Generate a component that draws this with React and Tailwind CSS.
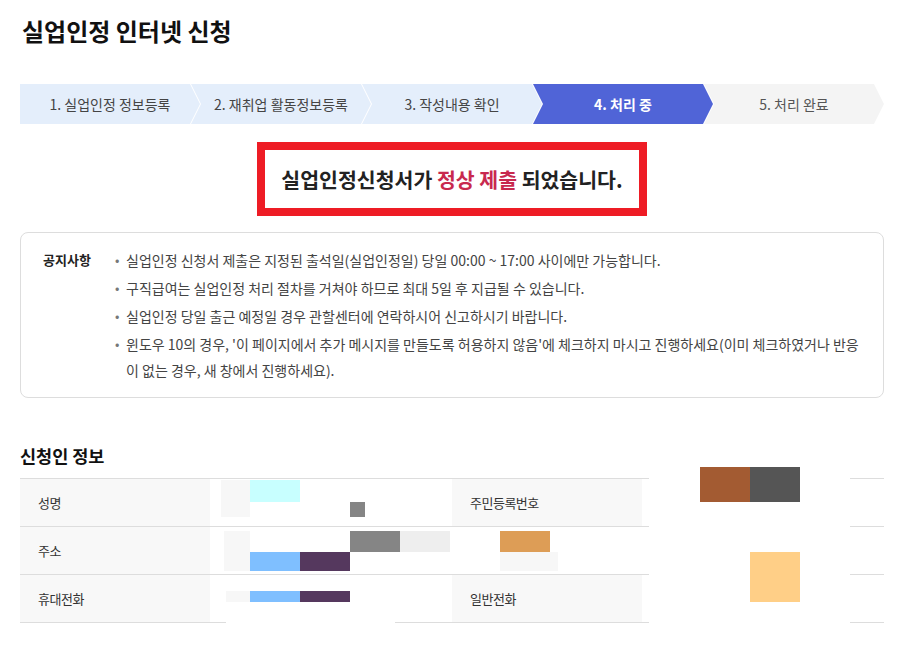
const steps = [
  { label: '1. 실업인정 정보등록', state: 'done' },
  { label: '2. 재취업 활동정보등록', state: 'done' },
  { label: '3. 작성내용 확인', state: 'done' },
  { label: '4. 처리 중', state: 'active' },
  { label: '5. 처리 완료', state: 'todo' },
]

const notices = [
  ['실업인정 신청서 제출은 지정된 출석일(실업인정일) 당일 00:00 ~ 17:00 사이에만 가능합니다.'],
  ['구직급여는 실업인정 처리 절차를 거쳐야 하므로 최대 5일 후 지급될 수 있습니다.'],
  ['실업인정 당일 출근 예정일 경우 관할센터에 연락하시어 신고하시기 바랍니다.'],
  [
    "윈도우 10의 경우, '이 페이지에서 추가 메시지를 만들도록 허용하지 않음'에 체크하지 마시고 진행하세요(이미 체크하였거나 반응",
    '이 없는 경우, 새 창에서 진행하세요).',
  ],
]

// privacy masks laid over the applicant table, page coordinates
const masks = [
  ['left-[221px] top-[480px] w-[29px] h-[37px] bg-[#f7f7f7]'],
  ['left-[250px] top-[480px] w-[50px] h-[22px] bg-[#c8ffff]'],
  ['left-[350px] top-[502px] w-[15px] h-[15px] bg-[#858585]'],
  ['left-[224px] top-[531px] w-[26px] h-[40px] bg-[#f7f7f7]'],
  ['left-[350px] top-[531px] w-[50px] h-[21px] bg-[#858585]'],
  ['left-[400px] top-[531px] w-[50px] h-[21px] bg-[#eeeeee]'],
  ['left-[250px] top-[552px] w-[50px] h-[19px] bg-[#7fbfff]'],
  ['left-[300px] top-[552px] w-[50px] h-[19px] bg-[#55385e]'],
  ['left-[226px] top-[591px] w-[24px] h-[11px] bg-[#f7f7f7]'],
  ['left-[250px] top-[591px] w-[50px] h-[11px] bg-[#7fbfff]'],
  ['left-[300px] top-[591px] w-[50px] h-[11px] bg-[#55385e]'],
  ['left-[226px] top-[603px] w-[169px] h-[27px] bg-white'],
  ['left-[500px] top-[531px] w-[50px] h-[21px] bg-[#dd9d56]'],
  ['left-[500px] top-[552px] w-[58px] h-[19px] bg-[#f7f7f7]'],
  ['left-[649px] top-[467px] w-[201px] h-[163px] bg-white'],
  ['left-[700px] top-[467px] w-[50px] h-[35px] bg-[#a35b32]'],
  ['left-[750px] top-[467px] w-[50px] h-[35px] bg-[#555555]'],
  ['left-[750px] top-[552px] w-[50px] h-[50px] bg-[#ffcf87]'],
]

function Steps() {
  return (
    <div className="mt-[38px] flex h-10">
      {steps.map((s, i) => {
        const color =
          s.state === 'active'
            ? 'bg-[#5064d7] text-white font-bold'
            : s.state === 'done'
            ? 'bg-[#e4eefb] text-[#444]'
            : 'bg-[#f4f4f4] text-[#555]'
        const shape =
          i === 0
            ? '[clip-path:polygon(0_0,170px_0,180px_50%,170px_100%,0_100%)]'
            : '-ml-[9px] [clip-path:polygon(0_0,170px_0,180px_50%,170px_100%,0_100%,10px_50%)]'
        return (
          <div
            key={s.label}
            className={`flex w-[180px] shrink-0 items-center justify-center text-[14px] ${color} ${shape}`}
          >
            {s.label}
          </div>
        )
      })}
    </div>
  )
}

function Notice() {
  return (
    <div className="mt-4 flex rounded-lg border border-[#dddddd] px-[22px] pt-[14px] pb-[14px] text-[14px]">
      <div className="w-[72px] shrink-0 text-[13px] font-bold leading-[26px] text-[#222]">공지사항</div>
      <ul className="flex flex-col gap-[2px] text-[#444]">
        {notices.map((lines, i) => (
          <li key={i} className="flex leading-[26px]">
            <span className="w-[11px] shrink-0 text-[13px] text-[#777]">•</span>
            <div>
              {lines.map((l) => (
                <div key={l} className="whitespace-nowrap">
                  {l}
                </div>
              ))}
            </div>
          </li>
        ))}
      </ul>
    </div>
  )
}

function ApplicantTable() {
  const th = 'flex items-center bg-[#f8f8f8] pl-[18px] border-b border-[#dddddd] text-[13px] tracking-[-0.5px] text-[#333]'
  const td = 'border-b border-[#dddddd] bg-white'
  return (
    <div className="mt-[10px] grid h-[145px] grid-cols-[190px_242px_190px_242px] grid-rows-[48px_48px_48px] border-t border-[#dddddd]">
      <div className={th}>성명</div>
      <div className={td} />
      <div className={th}>주민등록번호</div>
      <div className={td} />
      <div className={th}>주소</div>
      <div className={`${td} col-span-3`} />
      <div className={th}>휴대전화</div>
      <div className={td} />
      <div className={th}>일반전화</div>
      <div className={td} />
    </div>
  )
}

export default function App() {
  return (
    <div className="relative min-h-[652px] w-[907px] bg-white pl-5 pr-[23px] font-['Noto_Sans_CJK_KR','Noto_Sans',sans-serif] text-[#222]">
      <h1 className="pl-[2px] pt-4 text-[24px] font-bold leading-[30px] text-[#111]">실업인정 인터넷 신청</h1>

      <Steps />

      <div className="mx-auto mt-[18px] flex h-[74px] w-[390px] items-center justify-center border-[8px] border-[#ee1c25]">
        <p className="text-[20.5px] font-bold text-[#222]">
          실업인정신청서가 <span className="text-[#c8294e]">정상 제출</span> 되었습니다.
        </p>
      </div>

      <Notice />

      <h2 className="mt-[46px] text-[17.5px] font-bold leading-6 text-[#111]">신청인 정보</h2>

      <ApplicantTable />

      {masks.map(([c]) => (
        <div key={c} className={`absolute ${c}`} />
      ))}
    </div>
  )
}
